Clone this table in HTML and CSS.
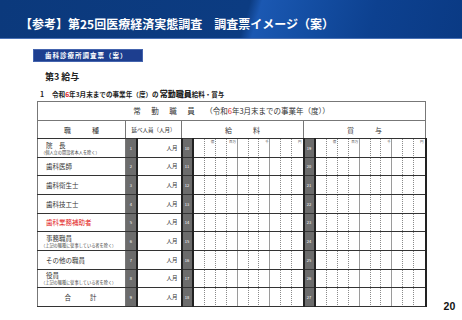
FILE: index.html
```html
<!DOCTYPE html>
<html lang="ja">
<head>
<meta charset="utf-8">
<title>調査票イメージ</title>
<link rel="stylesheet" href="styles.css">
</head>
<body>
<header class="hdr"><h1 class="ttl">【参考】第25回医療経済実態調査　調査票イメージ（案）</h1></header>
<div class="tag">歯科診療所調査票（案）</div>
<h2 class="sec">第3 給与</h2>
<p class="lead"><span class="no">1</span><span>令和<span class="red">6</span>年3月末までの事業年（度）の</span><b class="big">常勤職員</b><span class="sm">給料・賞与</span></p>
<div class="bottom">
<table class="grid">
<colgroup><col class="c-nm"><col class="c-n"><col class="c-in"><col class="c-n"><col class="c-mo"><col class="c-n"><col class="c-mo"></colgroup>
<thead>
<tr class="r-title"><th colspan="7"><span class="wide">常勤職員</span>（令和<span class="red">6</span>年3月末までの事業年（度））</th></tr>
<tr class="r-head"><th>職　　　種</th><th colspan="2" class="small-h">延べ人員（人月）</th><th colspan="2">給　　　料</th><th colspan="2">賞　　　与</th></tr>
</thead>
<tbody>
<tr><td class="nm"><span class="jt">院　長</span><span class="note">（個人立の開設者本人を除く）</span></td><td class="n">1</td><td class="in">人月</td><td class="n">10</td><td class="mo top"><div class="lbl"><span></span><span>億</span><span></span><span>百万</span><span></span><span></span><span>千</span><span></span><span></span><span>円</span></div></td><td class="n">19</td><td class="mo top"><div class="lbl"><span></span><span>億</span><span></span><span>百万</span><span></span><span></span><span>千</span><span></span><span></span><span>円</span></div></td></tr>
<tr><td class="nm">歯科医師</td><td class="n">2</td><td class="in">人月</td><td class="n">11</td><td class="mo"></td><td class="n">20</td><td class="mo"></td></tr>
<tr><td class="nm">歯科衛生士</td><td class="n">3</td><td class="in">人月</td><td class="n">12</td><td class="mo"></td><td class="n">21</td><td class="mo"></td></tr>
<tr><td class="nm">歯科技工士</td><td class="n">4</td><td class="in">人月</td><td class="n">13</td><td class="mo"></td><td class="n">22</td><td class="mo"></td></tr>
<tr><td class="nm red">歯科業務補助者</td><td class="n">5</td><td class="in">人月</td><td class="n">14</td><td class="mo"></td><td class="n">23</td><td class="mo"></td></tr>
<tr><td class="nm"><span class="jt">事務職員</span><span class="note">（上記の職種に従事している者を除く）</span></td><td class="n">6</td><td class="in">人月</td><td class="n">15</td><td class="mo"></td><td class="n">24</td><td class="mo"></td></tr>
<tr><td class="nm">その他の職員</td><td class="n">7</td><td class="in">人月</td><td class="n">16</td><td class="mo"></td><td class="n">25</td><td class="mo"></td></tr>
<tr><td class="nm"><span class="jt">役員</span><span class="note">（上記の職種に従事している者を除く）</span></td><td class="n">8</td><td class="in">人月</td><td class="n">17</td><td class="mo"></td><td class="n">26</td><td class="mo"></td></tr>
<tr><td class="nm total">合　　計</td><td class="n">9</td><td class="in">人月</td><td class="n">18</td><td class="mo"></td><td class="n">27</td><td class="mo"></td></tr>
</tbody>
</table>
<div class="page">20</div>
</div>
</body>
</html>
```

FILE: styles.css
```css
* { box-sizing: border-box; margin: 0; padding: 0; }
html, body { width: 462px; height: 320px; overflow: hidden; background: #fff; }
body {
  font-family: "Noto Sans CJK JP", "Noto Sans", sans-serif;
  color: #333;
  display: flex;
  flex-direction: column;
}
.red { color: #e32222; }

.hdr {
  height: 39px;
  border-bottom: 1px solid #4a72b6;
  background: linear-gradient(106deg, #0b397c 0%, #0c3c82 53%, #1b58b2 55.5%, #1550a6 64%, #0d4190 80%, #0a3a84 100%);
  display: flex;
  align-items: center;
  padding: 10px 0 0 20px;
}
.ttl { font-size: 12px; font-weight: bold; color: #fff; line-height: 14px; white-space: nowrap; }

.tag {
  margin: 10px 0 0 33px;
  width: 110px;
  height: 13px;
  background: #1d3e8f;
  border: 1px solid #4464ae;
  color: #fff;
  font-size: 6.5px;
  font-weight: bold;
  letter-spacing: 1px;
  line-height: 11px;
  padding-left: 11px;
}
.sec { margin: 9px 0 0 45px; font-size: 9px; font-weight: bold; line-height: 12px; color: #222; }

.lead {
  margin: 6px 0 0 40px;
  display: flex;
  align-items: baseline;
  font-size: 6.6px;
  font-weight: bold;
  line-height: 10px;
  color: #222;
}
.lead .no { width: 12px; font-size: 7px; }
.lead .big { font-size: 8px; margin-left: 1px; }
.lead .sm { font-size: 6.5px; }

.bottom {
  margin-top: 2px;
  padding-left: 37px;
  display: flex;
  align-items: flex-end;
  gap: 17px;
}
.page {
  font-family: "Liberation Sans", Arial, sans-serif;
  font-weight: bold;
  font-size: 10.5px;
  line-height: 10px;
  color: #111;
  margin-bottom: -4px;
}

.grid {
  width: 388px;
  table-layout: fixed;
  border-collapse: collapse;
  border: 1px solid #555;
  font-size: 6.5px;
  color: #333;
}
.c-nm { width: 88px; }
.c-n { width: 11px; }
.c-in { width: 45px; }
.c-mo { width: 111px; }
.grid th, .grid td { border: 1px solid #777; padding: 0; font-weight: normal; }

.r-title th { height: 19px; font-size: 7.5px; text-align: center; line-height: 10px; }
.wide { letter-spacing: 10.5px; }
.r-head th { height: 18px; font-size: 7px; text-align: center; border-bottom: 1px solid #333; }
.r-head .small-h { font-size: 5.5px; }

.grid tbody tr { height: 18.67px; }
.grid tbody td { border-top: 1px solid #333; border-bottom: 1px solid #333; }
.nm { padding-left: 8px !important; line-height: 8px; text-align: left; vertical-align: middle; }
.nm .jt { display: block; }
.nm .note { display: block; font-size: 4.2px; line-height: 6px; margin-left: -5px; color: #444; }
.nm.total { text-align: center; padding-left: 0 !important; letter-spacing: 2px; }

.n {
  background: #6c6c6c;
  color: #fff;
  font-size: 4px;
  text-align: center;
  border-left: 1px solid #444 !important;
  border-right: 1px solid #444 !important;
}
.in {
  border-left: 2px solid #222 !important;
  border-right: 2px solid #222 !important;
  text-align: right;
  padding-right: 3px !important;
  font-size: 5.5px;
}
.mo {
  border-left: 2px solid #222 !important;
  border-right: 2px solid #222 !important;
  --d: repeating-linear-gradient(to bottom, #8a8a8a 0 1px, transparent 1px 2px);
  --s: linear-gradient(#9a9a9a, #9a9a9a);
  background:
    var(--d) 10% 0 / 1px 100% no-repeat,
    var(--d) 20% 0 / 1px 100% no-repeat,
    var(--d) 30% 0 / 1px 100% no-repeat,
    var(--s) 40% 0 / 1px 100% no-repeat,
    var(--d) 50% 0 / 1px 100% no-repeat,
    var(--d) 60% 0 / 1px 100% no-repeat,
    var(--s) 70% 0 / 1px 100% no-repeat,
    var(--d) 80% 0 / 1px 100% no-repeat,
    var(--d) 90% 0 / 1px 100% no-repeat;
}
.mo.top { vertical-align: top; }
.lbl {
  display: grid;
  grid-template-columns: repeat(10, 1fr);
  font-size: 3.5px;
  line-height: 5px;
  color: #555;
  text-align: right;
}
.lbl span { padding-right: 1px; }
```
